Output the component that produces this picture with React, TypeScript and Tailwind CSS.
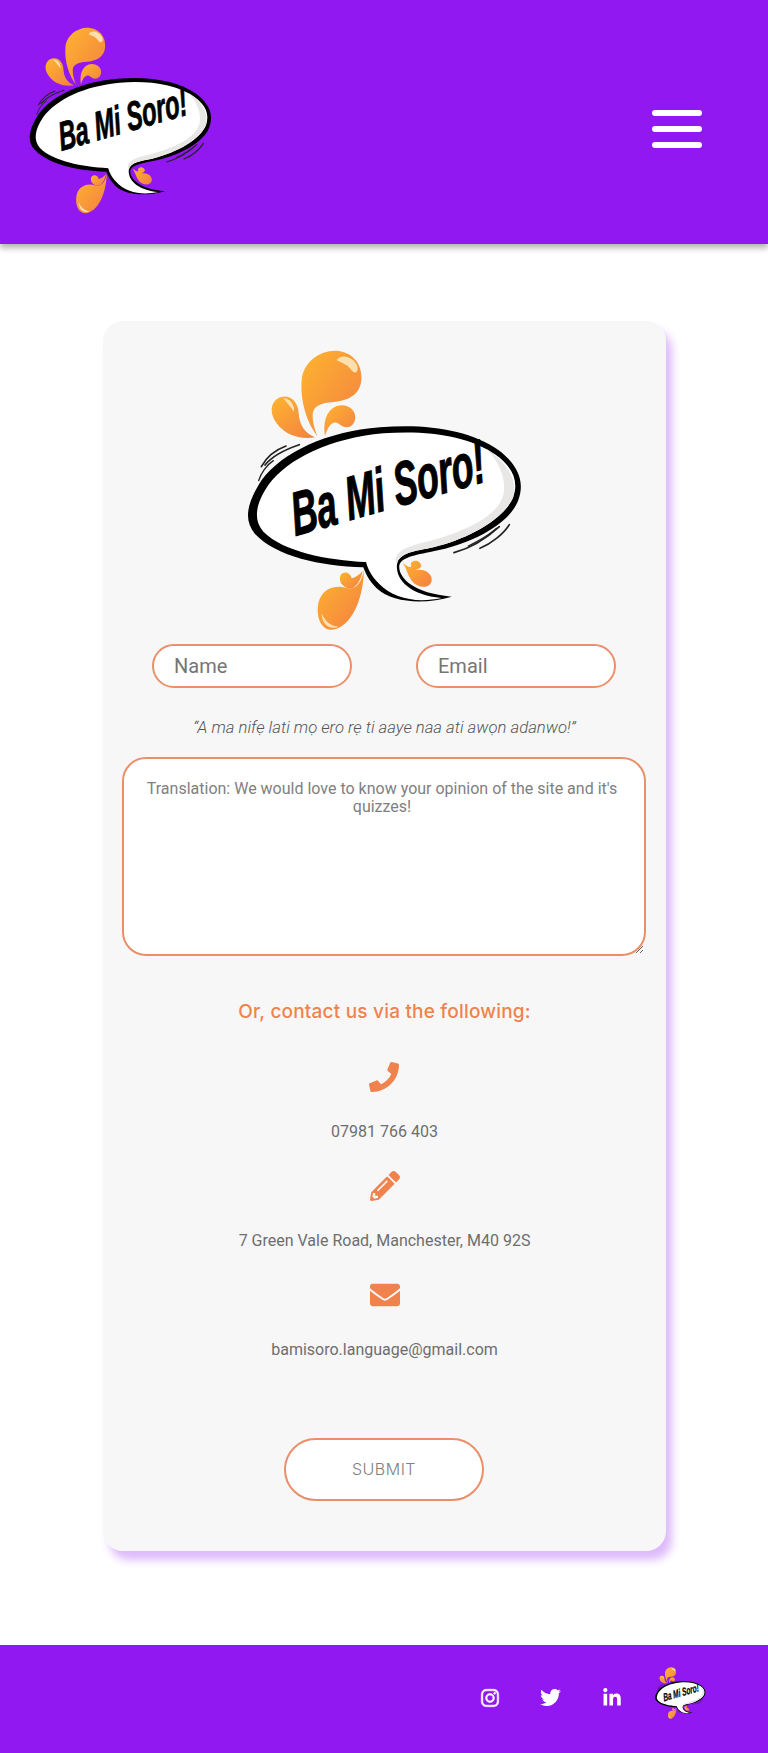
import { useId } from "react";
import {
  FaEnvelope,
  FaInstagram,
  FaLinkedinIn,
  FaPencilAlt,
  FaPhone,
  FaTwitter,
} from "react-icons/fa";

function Logo({ className }: { className: string }) {
  const id = useId();
  const fill = `url(#${id})`;

  return (
    <svg viewBox="0 0 960 930" className={className} fill="none">
      <defs>
        <linearGradient id={id} x1="0" y1="0" x2="1" y2="1">
          <stop offset="0" stopColor="#fdb52f" />
          <stop offset="1" stopColor="#f47f42" />
        </linearGradient>
      </defs>

      {/* drops above the bubble */}
      <path
        d="M292 318C262 280 240 215 245 150C250 95 300 60 350 62C400 66 428 105 424 150C420 195 385 212 340 216C305 218 280 228 278 252C277 275 284 298 292 318Z"
        fill={fill}
      />
      <path
        d="M285 322C240 330 195 315 170 280C148 250 150 215 180 202C210 192 235 215 236 250C238 285 255 310 285 322Z"
        fill={fill}
      />
      <path
        d="M315 318C308 280 318 240 350 228C380 218 408 238 406 265C402 292 378 300 358 283C340 268 325 285 315 318Z"
        fill={fill}
      />
      <path d="M350 90C365 70 400 80 412 108C416 128 405 135 392 118C382 102 365 100 350 90Z" fill="#fde0ae" />
      <path d="M190 205C210 205 225 225 222 245C210 228 200 218 190 205Z" fill="#fde0ae" />

      {/* drops below the bubble */}
      <path
        d="M432 720C430 790 405 880 345 898C305 908 285 860 296 815C308 775 345 762 385 775C410 778 425 755 432 720Z"
        fill={fill}
      />
      <path d="M362 735C375 720 392 730 395 745C405 742 418 735 428 722C422 755 405 778 385 775C365 770 355 752 362 735Z" fill={fill} />
      <path
        d="M548 698C568 715 578 714 572 702C578 686 602 690 604 708C600 716 592 718 585 721C612 714 638 730 635 752C630 776 595 776 575 752C563 735 560 716 548 698Z"
        fill={fill}
      />
      <path d="M305 850C315 875 335 890 355 890C335 900 305 890 305 850Z" fill="#fde0ae" />

      {/* speed lines */}
      <g stroke="#222" strokeLinecap="round">
        <path d="M124 410C140 380 165 360 198 348" strokeWidth="5" />
        <path d="M135 405C155 380 190 360 238 344" strokeWidth="5" />
        <path d="M116 452C122 430 140 405 160 392" strokeWidth="4" />
        <path d="M702 668C750 655 800 625 838 590" strokeWidth="5" />
        <path d="M780 655C815 640 850 612 868 584" strokeWidth="5" />
        <path d="M745 648C780 632 810 612 830 595" strokeWidth="4" />
      </g>

      {/* bubble */}
      <path
        d="M430 712C300 708 170 680 105 612C70 570 80 520 125 450C190 365 320 305 480 292C620 280 750 300 835 360C895 405 915 455 895 510C870 580 760 640 640 664C590 675 548 680 538 705C533 740 575 790 695 800C620 822 520 822 470 775C450 755 438 735 430 712Z"
        fill="#000"
      />
      <path
        d="M438 696C320 690 190 665 130 605C100 570 105 525 145 465C205 385 330 325 490 310C625 300 745 318 825 373C880 412 896 455 880 500C855 565 750 625 640 652C585 664 537 668 531 703C526 745 565 795 665 804C590 820 520 806 478 762C458 742 445 722 438 696Z"
        fill="#fff"
      />
      <path
        d="M800 356C840 385 895 430 880 500C855 565 750 625 640 652C585 664 537 668 531 703L527 690C530 655 580 645 640 630C745 600 835 555 850 495C860 450 840 400 800 356Z"
        fill="#e9e6e6"
      />
      <text
        x="0"
        y="0"
        transform="translate(226 618) rotate(-16) skewX(-6) scale(1 1.75)"
        fontFamily="'Liberation Sans Narrow', 'Liberation Sans', sans-serif"
        fontWeight="700"
        fontStyle="italic"
        fontSize="104"
        fill="#000"
        stroke="#000"
        strokeWidth="2"
        textLength="600"
        lengthAdjust="spacingAndGlyphs"
      >
        Ba Mi Soro!
      </text>
    </svg>
  );
}

const contacts = [
  { icon: FaPhone, text: "07981 766 403" },
  { icon: FaPencilAlt, text: "7 Green Vale Road, Manchester, M40 92S" },
  { icon: FaEnvelope, text: "bamisoro.language@gmail.com" },
];

export default function App() {
  return (
    <div className="min-h-[1753px] bg-white font-['Roboto',sans-serif] text-[#6e6e6e]">
      <header className="relative z-10 flex h-[244px] justify-between bg-[#9118f0] pl-[11px] pr-[66px] pt-[14px] shadow-[0_4px_6px_rgba(0,0,0,0.3)]">
        <Logo className="h-[206px] w-[213px]" />
        <button className="mt-[96px] flex h-[38px] w-[50px] flex-col justify-between">
          <span className="block h-[6px] rounded-[3px] bg-white" />
          <span className="block h-[6px] rounded-[3px] bg-white" />
          <span className="block h-[6px] rounded-[3px] bg-white" />
        </button>
      </header>

      <main className="pb-[94px] pl-[103px] pt-[77px]">
        <form className="flex h-[1230px] w-[563px] flex-col rounded-[20px] bg-[#f7f7f7] pt-[9px] shadow-[6px_9px_8px_rgba(146,25,242,0.3)]">
          <Logo className="ml-[117px] h-[310px] w-[320px] shrink-0" />

          <div className="ml-[49px] mt-[4px] flex gap-[64px]">
            <input
              placeholder="Name"
              className="h-[44px] w-[200px] rounded-[22px] border-2 border-[#e9906a] bg-white px-[20px] text-[20px] outline-none placeholder:text-[#757575]"
            />
            <input
              placeholder="Email"
              className="h-[44px] w-[200px] rounded-[22px] border-2 border-[#e9906a] bg-white px-[20px] text-[20px] outline-none placeholder:text-[#757575]"
            />
          </div>

          <p className="mt-[28px] text-center text-[16.7px] font-light italic leading-[24px] text-[#555]">
            “A ma nifẹ lati mọ ero rẹ ti aaye naa ati awọn adanwo!”
          </p>

          <textarea
            placeholder="Translation: We would love to know your opinion of the site and it's quizzes!"
            className="ml-[19px] mt-[17px] h-[199px] w-[524px] shrink-0 rounded-[24px] border-2 border-[#e9906a] bg-white pb-[20px] pl-[18px] pr-[22px] pt-[21px] text-center text-[16px] leading-[18px] outline-none placeholder:text-[#808080]"
          />

          <h2 className="mt-[42px] text-center font-['Inter',sans-serif] text-[19px] font-medium leading-[27px] tracking-[0.2px] text-[#f0824e]">
            Or, contact us via the following:
          </h2>

          <div className="mt-[10px] flex flex-col items-center">
            {contacts.map((c) => (
              <div key={c.text} className="mt-[27px] flex flex-col items-center">
                <c.icon className="mb-[2px] h-[30px] w-[30px] text-[#f0824e]" />
                <p className="mt-[26px] text-[16px] leading-[24px]">{c.text}</p>
              </div>
            ))}
          </div>

          <button className="ml-[181px] mt-[76px] h-[63px] w-[200px] rounded-[32px] border-2 border-[#e9906a] bg-white pb-[2px] font-['Inter',sans-serif] text-[16px] font-light tracking-[0.5px] text-[#808080]">
            SUBMIT
          </button>
        </form>
      </main>

      <footer className="flex h-[108px] items-start bg-[#9118f0] pl-[480px] pt-[18px] text-white">
        <div className="mt-[24px] flex items-center">
          <FaInstagram className="h-[20px] w-[20px] stroke-current stroke-[14]" />
          <FaTwitter className="ml-[40px] h-[21px] w-[21px]" />
          <FaLinkedinIn className="ml-[41px] h-[20px] w-[20px]" />
        </div>
        <Logo className="ml-[28px] h-[58px] w-[59px]" />
      </footer>
    </div>
  );
}
